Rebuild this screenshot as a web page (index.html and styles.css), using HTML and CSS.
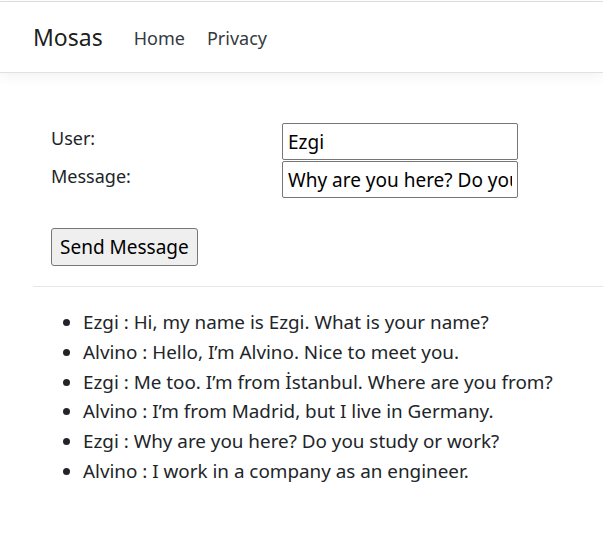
FILE: index.html
```html
<!DOCTYPE html>
<html>
<head>
<meta charset="utf-8">
<link rel="stylesheet" href="styles.css">
</head>
<body>
<div class="topline"></div>
<header class="navbar">
  <a class="brand">Mosas</a>
  <nav class="nav">
    <a class="nav-link">Home</a>
    <a class="nav-link">Privacy</a>
  </nav>
</header>
<main class="container">
  <div class="form">
    <div class="grid">
      <label class="lbl">User:</label>
      <input class="field" type="text" value="Ezgi">
      <label class="lbl">Message:</label>
      <input class="field" type="text" value="Why are you here? Do you study or work?">
    </div>
    <button class="btn">Send Message</button>
  </div>
  <hr class="rule">
  <ul class="messages">
    <li>Ezgi : Hi, my name is Ezgi. What is your name?</li>
    <li>Alvino : Hello, I’m Alvino. Nice to meet you.</li>
    <li>Ezgi : Me too. I’m from İstanbul. Where are you from?</li>
    <li>Alvino : I’m from Madrid, but I live in Germany.</li>
    <li>Ezgi : Why are you here? Do you study or work?</li>
    <li>Alvino : I work in a company as an engineer.</li>
  </ul>
</main>
</body>
</html>
```
FILE: styles.css
```css
html, body {
  margin: 0;
  padding: 0;
  background: #fff;
}
body {
  font-family: "Noto Sans", "Open Sans", sans-serif;
  font-size: 18px;
  color: #212529;
  overflow: hidden;
}
.topline {
  height: 1px;
  margin-top: 1px;
  background: #dedede;
}
.navbar {
  height: 70px;
  display: flex;
  align-items: center;
  padding-left: 33px;
  border-bottom: 1px solid #dee2e6;
  box-shadow: 0 4px 12px rgba(0,0,0,0.05);
}
.brand {
  font-size: 23px;
  color: rgba(0,0,0,0.9);
  margin-right: 31px;
  margin-top: -1px;
}
.nav {
  display: flex;
  gap: 22px;
  margin-top: 1px;
}
.nav-link {
  font-size: 18px;
  color: #343a40;
}
.container {
  padding: 50px 0 0 33px;
}
.form {
  padding-left: 18px;
}
.grid {
  display: grid;
  grid-template-columns: 231px 236px;
  grid-auto-rows: 37px;
  row-gap: 1px;
}
.lbl {
  line-height: 30px;
}
.field {
  box-sizing: border-box;
  height: 37px;
  width: 236px;
  border: 1px solid #767676;
  border-radius: 2px;
  padding: 0 5px;
  font-family: inherit;
  font-size: 19px;
  color: #000;
}
.btn {
  margin-top: 30px;
  height: 38px;
  padding: 0 8px;
  background: #efefef;
  border: 1px solid #767676;
  border-radius: 3px;
  font-family: inherit;
  font-size: 19px;
  color: #000;
}
.rule {
  margin: 20px 0 0 0;
  border: 0;
  border-top: 1px solid #e6e6e6;
}
.messages {
  margin: 21px 0 0 0;
  padding-left: 50px;
  font-size: 18.85px;
  line-height: 29.8px;
}
```
